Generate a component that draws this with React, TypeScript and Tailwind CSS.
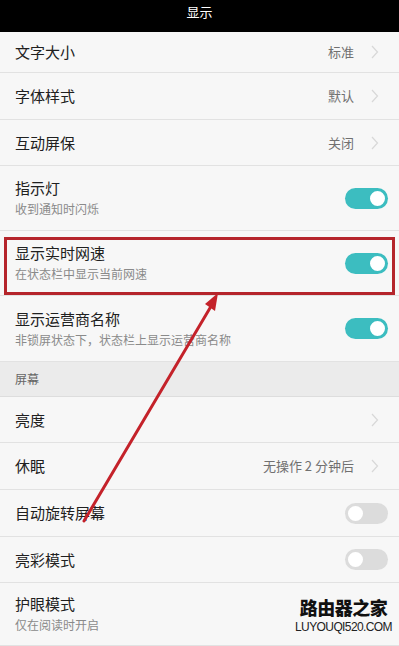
import React from 'react';

type Row = {
  title: string;
  sub?: string;
  value?: string;
  chevron?: boolean;
  toggle?: 'on' | 'off';
  h: string;
};

const top: Row[] = [
  { title: '文字大小', value: '标准', chevron: true, h: 'h-[41px]' },
  { title: '字体样式', value: '默认', chevron: true, h: 'h-[47px]' },
  { title: '互动屏保', value: '关闭', chevron: true, h: 'h-[46px]' },
  { title: '指示灯', sub: '收到通知时闪烁', toggle: 'on', h: 'h-[65px]' },
  { title: '显示实时网速', sub: '在状态栏中显示当前网速', toggle: 'on', h: 'h-[65px]' },
  { title: '显示运营商名称', sub: '非锁屏状态下，状态栏上显示运营商名称', toggle: 'on', h: 'h-[66px]' },
];

const screen: Row[] = [
  { title: '亮度', chevron: true, h: 'h-[46px]' },
  { title: '休眠', value: '无操作 2 分钟后', chevron: true, h: 'h-[47px]' },
  { title: '自动旋转屏幕', toggle: 'off', h: 'h-[47px]' },
  { title: '亮彩模式', toggle: 'off', h: 'h-[46px]' },
  { title: '护眼模式', sub: '仅在阅读时开启', h: 'h-[63px]' },
];

function Chevron() {
  return (
    <svg width="8" height="14" viewBox="0 0 8 14" className="ml-[17px] mr-[20px]">
      <path d="M1 1 L6.5 7 L1 13" fill="none" stroke="#d8d8d8" strokeWidth="1.2" />
    </svg>
  );
}

function Toggle({ on }: { on: boolean }) {
  if (on) {
    return (
      <div className="mr-[11px] flex h-[21px] w-[43px] items-center justify-end rounded-full bg-[#3cbdc0] px-[1px]">
        <div className="h-[19px] w-[19px] rounded-full border-[2px] border-[#3cbdc0] bg-white" />
      </div>
    );
  }
  return (
    <div className="mr-[11px] flex h-[21px] w-[43px] items-center justify-start rounded-full bg-[#dcdcdc] px-[1px]">
      <div className="h-[19px] w-[19px] rounded-full border-[2px] border-[#dcdcdc] bg-white" />
    </div>
  );
}

function SettingRow({ row }: { row: Row }) {
  return (
    <div className={`flex ${row.h} items-center border-b border-[#e2e2e2] bg-[#f7f7f7] pl-[15px]`}>
      <div className="flex flex-1 flex-col justify-center">
        <div className="text-[15px] leading-[20px] text-[#202020]">{row.title}</div>
        {row.sub && <div className="mt-[2px] text-[12px] leading-[18px] text-[#8a8a8a]">{row.sub}</div>}
      </div>
      {row.value && <div className="text-[13px] text-[#707070]">{row.value}</div>}
      {row.chevron && <Chevron />}
      {row.toggle && <Toggle on={row.toggle === 'on'} />}
    </div>
  );
}

export default function App() {
  return (
    <div
      className="relative h-[646px] w-[399px] overflow-hidden bg-[#f7f7f7]"
      style={{ fontFamily: '"Noto Sans CJK SC", "Noto Sans", sans-serif' }}
    >
      <div className="flex h-[32px] items-start justify-center bg-black pt-[2px] text-[13px] text-white">显示</div>
      {top.map((r) => (
        <SettingRow key={r.title} row={r} />
      ))}
      <div className="flex h-[35px] items-center border-b border-[#dddddd] bg-[#ebebeb] pl-[15px] text-[12px] text-[#666]">
        屏幕
      </div>
      {screen.map((r) => (
        <SettingRow key={r.title} row={r} />
      ))}

      {/* annotation box */}
      <div className="absolute left-[4px] top-[237px] h-[58px] w-[391px] border-[3px] border-[#b5252b]" />

      {/* annotation arrow */}
      <svg className="absolute left-0 top-0" width="399" height="646" viewBox="0 0 399 646">
        <line x1="84" y1="521" x2="210" y2="308" stroke="#c4222a" strokeWidth="3" strokeLinecap="round" />
        <polygon points="218,293 205,304 215,311" fill="#c4222a" />
      </svg>

      {/* watermark */}
      <div className="absolute right-[7px] top-[595px] flex flex-col items-center whitespace-nowrap">
        <div className="text-[18px] font-black leading-[24px] tracking-[-0.5px] text-[#111]">路由器之家</div>
        <div
          className="text-[12px] leading-[16px] tracking-[-0.6px] text-[#222]"
          style={{ fontFamily: '"Liberation Sans", sans-serif' }}
        >
          LUYOUQI520.COM
        </div>
      </div>
    </div>
  );
}
